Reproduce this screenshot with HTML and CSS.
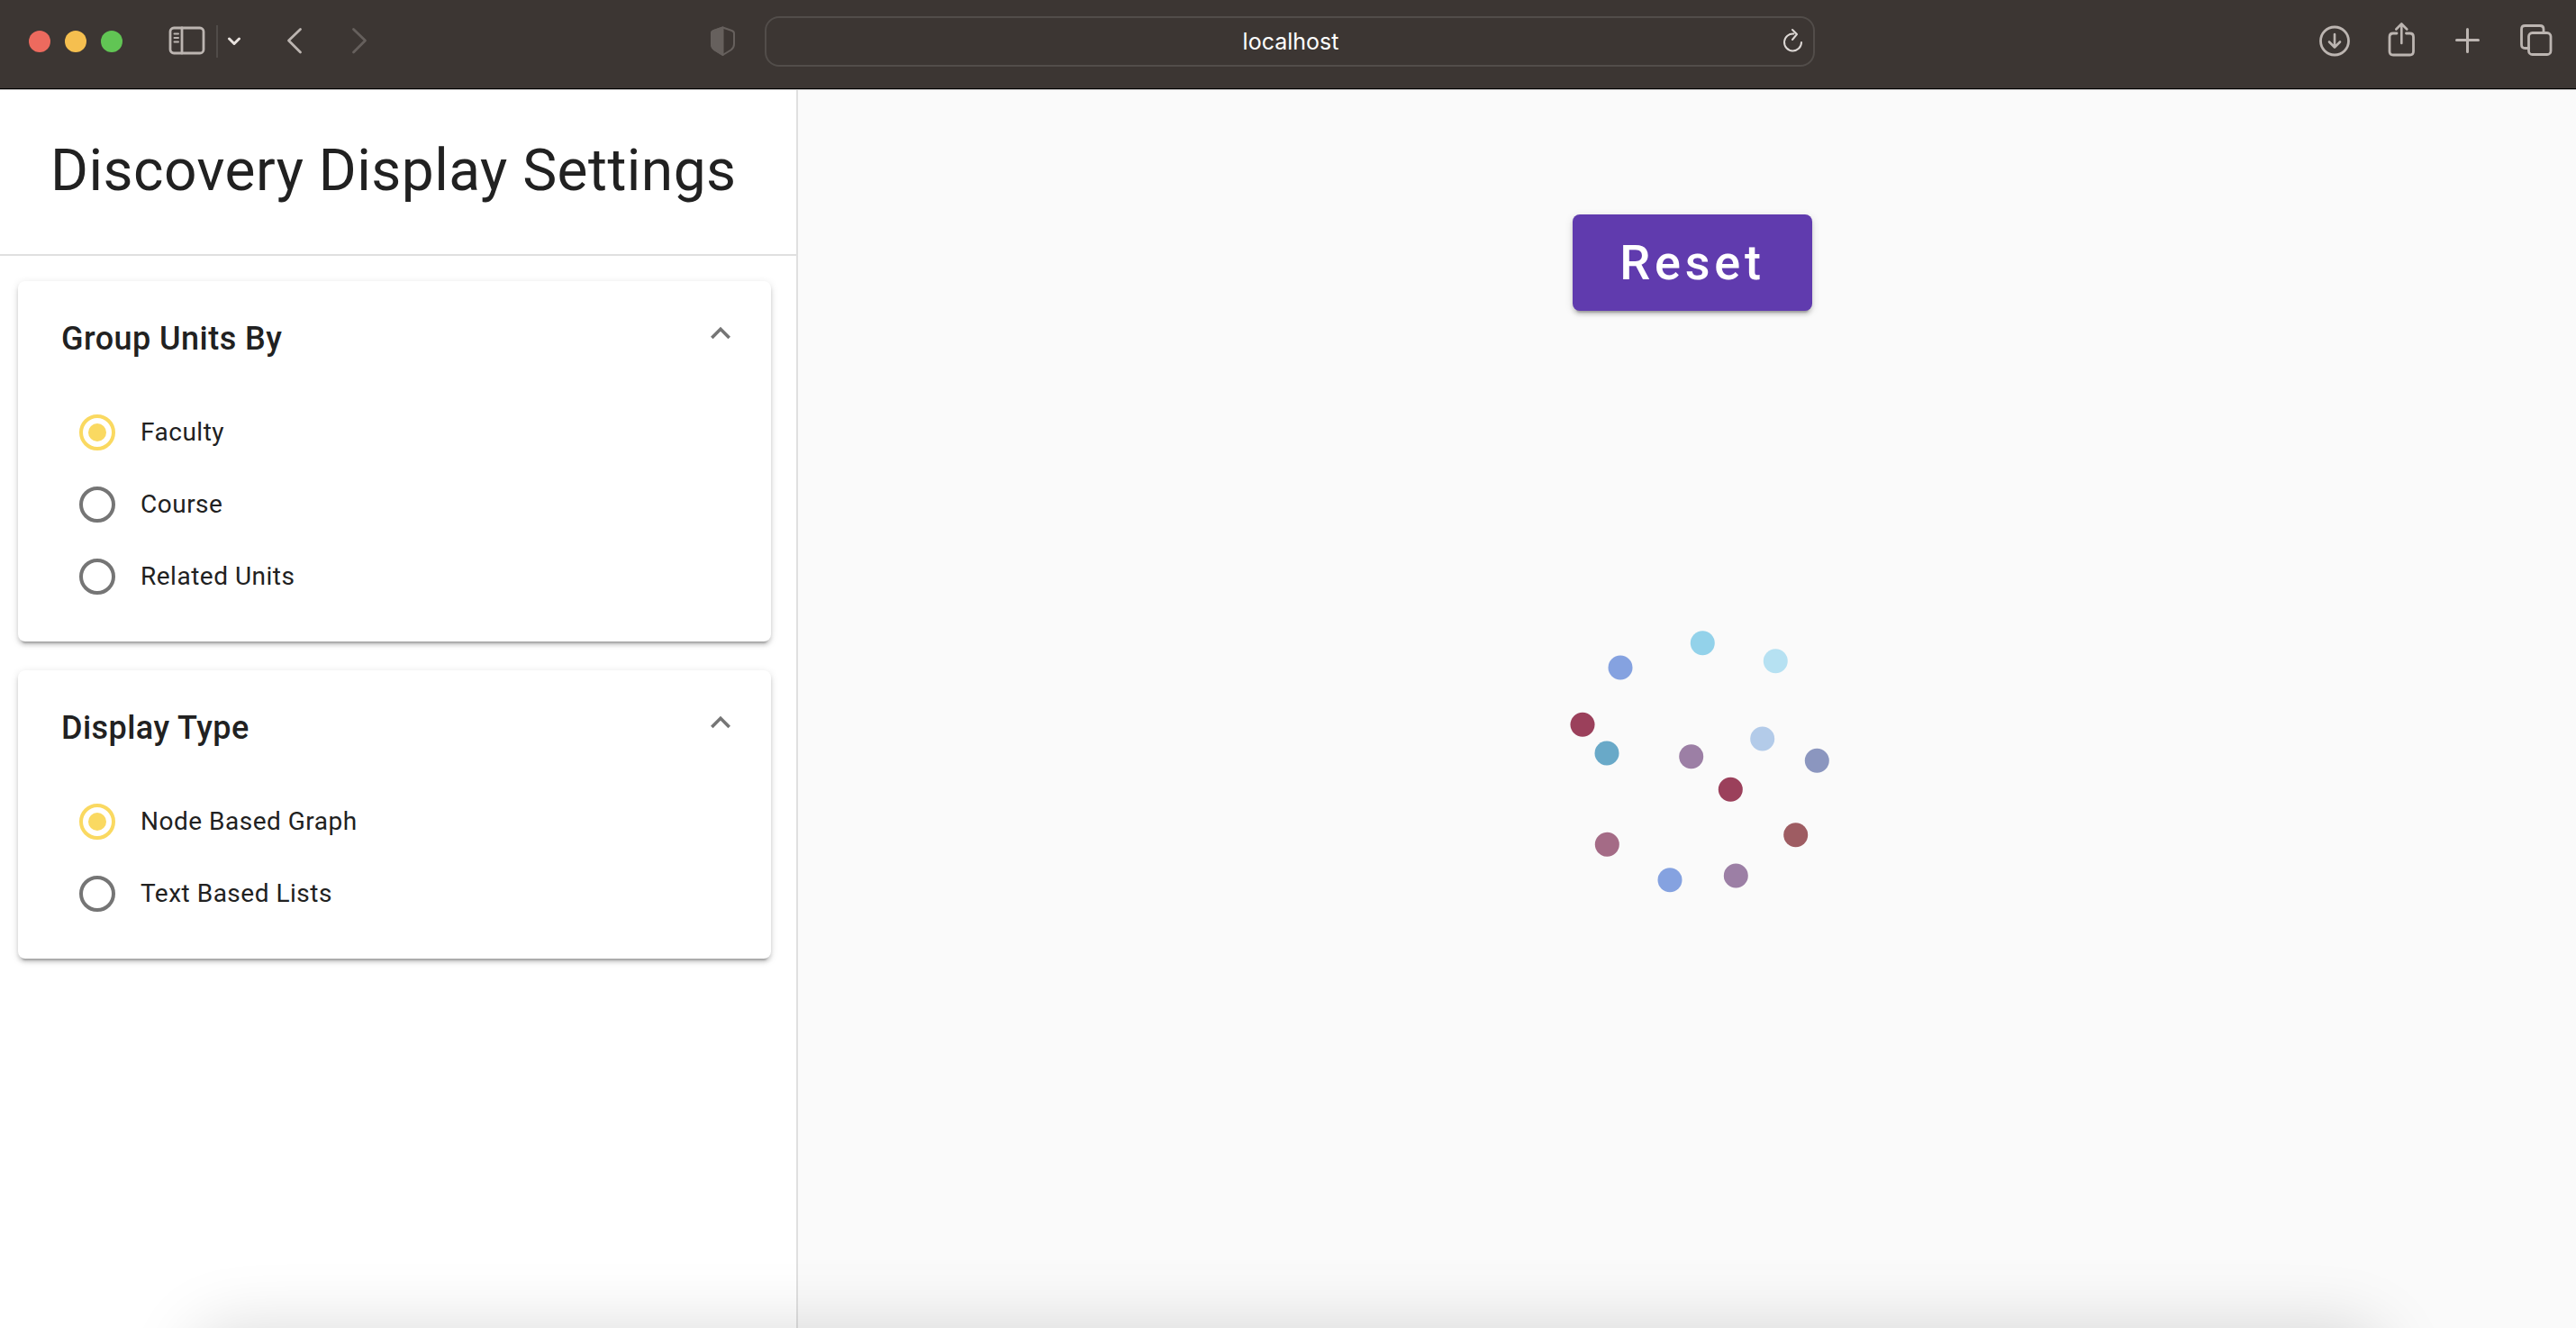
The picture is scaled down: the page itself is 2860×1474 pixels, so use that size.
FILE: index.html
```html
<!DOCTYPE html>
<html lang="en">
<head>
<meta charset="utf-8">
<meta name="viewport" content="width=device-width, initial-scale=1">
<title>Discovery Display Settings</title>
<link rel="stylesheet" href="styles.css">
</head>
<body>
<header class="toolbar">
  <div class="toolbar-left">
    <div class="lights">
      <button class="light light-close" aria-label="Close"></button>
      <button class="light light-min" aria-label="Minimize"></button>
      <button class="light light-max" aria-label="Full screen"></button>
    </div>
    <button class="tool sidebar-toggle" aria-label="Show sidebar">
      <svg width="44" height="44" viewBox="0 0 44 44"><rect x="3" y="7" width="37" height="28" rx="4"/><path d="M16 7v28"/><path class="thin" d="M7.500 13.500h4.500M7.500 18h4.500M7.500 22.500h4.500"/></svg>
    </button>
    <span class="divider"></span>
    <button class="tool tab-menu" aria-label="Tab groups">
      <svg width="18" height="44" viewBox="0 0 18 44"><path d="M3.500 19l5.500 5.500 5.500-5.500"/></svg>
    </button>
    <button class="tool back" aria-label="Back">
      <svg width="44" height="44" viewBox="0 0 44 44"><path d="M28.500 8.500L15.500 21l13 13"/></svg>
    </button>
    <button class="tool forward" aria-label="Forward" disabled>
      <svg width="44" height="44" viewBox="0 0 44 44"><path d="M15.500 8.500L28.500 21l-13 13"/></svg>
    </button>
    <button class="tool shield" aria-label="Privacy report">
      <svg width="44" height="44" viewBox="0 0 44 44"><path d="M22.500 6.500l10 3.500q2.500 1 2.500 3v12q0 4-3.500 6.500l-9 5.500-9-5.500Q10 29 10 25V13q0-2 2.500-3z"/><path class="half" d="M22.500 6.500v30.500l-9-5.500Q10 29 10 25V13q0-2 2.500-3z"/></svg>
    </button>
  </div>
  <div class="address">
    <input class="address-input" type="text" value="localhost" aria-label="Address">
    <button class="tool reload" aria-label="Reload">
      <svg width="32" height="36" viewBox="0 0 32 36"><path d="M16.500 9.500A9.500 9.500 0 1 0 25 19"/><path d="M15 5l5 5-5 6"/></svg>
    </button>
  </div>
  <div class="toolbar-right">
    <button class="tool" aria-label="Downloads">
      <svg width="44" height="44" viewBox="0 0 44 44"><circle cx="20" cy="21.500" r="15.500"/><path class="fine" d="M20 14v14.500M14 22.500l6 6 6-6"/></svg>
    </button>
    <button class="tool" aria-label="Share">
      <svg width="44" height="44" viewBox="0 0 44 44"><path d="M15 13h-4q-4 0-4 4v16q0 4 4 4h18.500q4 0 4-4V17q0-4-4-4h-4"/><path class="fine" d="M20.300 24V3M14.300 8.500l6-6 6 6"/></svg>
    </button>
    <button class="tool" aria-label="New tab">
      <svg width="44" height="44" viewBox="0 0 44 44"><path class="thick" d="M19.500 8.500v25M7.500 20.500h24"/></svg>
    </button>
    <button class="tool" aria-label="Tab overview">
      <svg width="44" height="44" viewBox="0 0 44 44"><rect x="13.500" y="12.500" width="24.500" height="24" rx="4"/><path d="M13.500 29.500H9.500q-4 0-4-4V8.500q0-4 4-4H26q4 0 4 4v4"/></svg>
    </button>
  </div>
</header>

<div class="app">
  <aside class="settings">
    <div class="settings-header"><h1 class="settings-title">Discovery Display Settings</h1></div>
    <div class="cards">
      <section class="card">
        <div class="card-header">
          <h2 class="card-title" id="group-title">Group Units By</h2>
          <button class="collapse" aria-label="Collapse Group Units By"><svg width="44" height="44" viewBox="0 0 24 24"><path d="M7.410 15.410L12 10.830l4.590 4.580L18 14l-6-6-6 6z"/></svg></button>
        </div>
        <div class="options" role="radiogroup" aria-labelledby="group-title">
          <label class="option"><input class="radio" type="radio" name="group" checked><span>Faculty</span></label>
          <label class="option"><input class="radio" type="radio" name="group"><span>Course</span></label>
          <label class="option"><input class="radio" type="radio" name="group"><span>Related Units</span></label>
        </div>
      </section>
      <section class="card">
        <div class="card-header">
          <h2 class="card-title" id="display-title">Display Type</h2>
          <button class="collapse" aria-label="Collapse Display Type"><svg width="44" height="44" viewBox="0 0 24 24"><path d="M7.410 15.410L12 10.830l4.590 4.580L18 14l-6-6-6 6z"/></svg></button>
        </div>
        <div class="options" role="radiogroup" aria-labelledby="display-title">
          <label class="option"><input class="radio" type="radio" name="display" checked><span>Node Based Graph</span></label>
          <label class="option"><input class="radio" type="radio" name="display"><span>Text Based Lists</span></label>
        </div>
      </section>
    </div>
  </aside>
  <main class="stage">
    <button class="reset">Reset</button>
    <svg class="graph" width="320" height="320" viewBox="-10 0 320 320" role="img" aria-label="Unit graph">
      <circle cx="161.300" cy="23.700" r="13.500" fill="#93d2ea"/>
      <circle cx="70" cy="51" r="13.500" fill="#85a2e0"/>
      <circle cx="242.300" cy="43.700" r="13.500" fill="#b6e1f2"/>
      <circle cx="28" cy="114.300" r="13.500" fill="#9b405b"/>
      <circle cx="55" cy="146" r="13.500" fill="#69a9c8"/>
      <circle cx="148.700" cy="149.700" r="13.500" fill="#9c7fa5"/>
      <circle cx="227.700" cy="130" r="13.500" fill="#b3cbe9"/>
      <circle cx="288.300" cy="154.300" r="13.500" fill="#8b96bf"/>
      <circle cx="192.300" cy="186.300" r="13.500" fill="#9b405b"/>
      <circle cx="264.700" cy="236.700" r="13.500" fill="#9e5c62"/>
      <circle cx="55.300" cy="247.300" r="13.500" fill="#a46b86"/>
      <circle cx="125" cy="286.700" r="13.500" fill="#85a2e0"/>
      <circle cx="198.300" cy="282" r="13.500" fill="#9c7fa5"/>
    </svg>
  </main>
</div>
<div class="dock-shadow"></div>
</body>
</html>
```
FILE: styles.css
```css
*, *::before, *::after { box-sizing: border-box; }

body {
  margin: 0;
  min-height: 100vh;
  display: flex;
  flex-direction: column;
  background: #fafafa;
  color: #212121;
  font-family: Roboto, "Liberation Sans", sans-serif;
}

button {
  margin: 0;
  padding: 0;
  border: 0;
  background: none;
  font: inherit;
}

svg { display: block; }

/* Browser toolbar */
.toolbar {
  display: grid;
  grid-template-columns: 1fr minmax(0, 1166px) 1fr;
  align-items: center;
  height: 99px;
  padding: 0 22px 6px 26px;
  background: #3c3633;
  border-bottom: 1px solid #000;
}

.toolbar-left { display: flex; align-items: center; padding-left: 6px; }
.toolbar-right { display: flex; align-items: center; justify-content: flex-end; gap: 30px; }

.lights { display: flex; gap: 16px; }
.light { width: 24px; height: 24px; border-radius: 50%; }
.light-close { background: #ed6a5e; }
.light-min { background: #f5bf4f; }
.light-max { background: #61c554; }

.tool svg {
  fill: none;
  stroke: #bcb5b1;
  stroke-width: 2.8;
  stroke-linecap: round;
  stroke-linejoin: round;
}
.tool .thin { stroke-width: 2; }
.tool .fine { stroke-width: 2.6; }
.tool .thick { stroke-width: 3; }

.sidebar-toggle { margin-left: 50px; }
.divider { width: 2px; height: 36px; margin: 0 9px 0 10px; background: #504b48; }
.tab-menu svg { stroke: #e8e2de; stroke-width: 3; }
.back { margin-left: 36px; }
.forward { margin-left: 28px; }
.forward svg { stroke: #66605d; }
.shield { margin-left: auto; margin-right: 25px; }
.shield svg { stroke: #66605d; stroke-width: 2; }
.shield .half { fill: #66605d; }

.address {
  display: flex;
  align-items: center;
  height: 56px;
  border: 2px solid #524d4a;
  border-radius: 16px;
  padding: 0 6px 0 40px;
}
.address-input {
  flex: 1;
  min-width: 0;
  padding: 0;
  border: 0;
  outline: 0;
  background: none;
  color: #fff;
  font-family: Inter, "Liberation Sans", sans-serif;
  font-size: 25px;
  line-height: 36px;
  text-align: center;
}
.reload svg { stroke: #ddd8d5; stroke-width: 2; }

/* Page */
.app { display: flex; flex: 1; border-top: 1px solid #c4c3c2; }

.settings {
  flex: 0 0 886px;
  background: #fff;
  border-right: 2px solid #e0e0e0;
}
.settings-header {
  padding: 50px 56px 52px;
  border-bottom: 2px solid #e0e0e0;
}
.settings-title {
  margin: 0;
  font-size: 64px;
  font-weight: 400;
  line-height: 80px;
  letter-spacing: 0.0073529em;
  white-space: nowrap;
}

.cards {
  display: flex;
  flex-direction: column;
  gap: 32px;
  padding: 28px 28px 28px 20px;
}
.card {
  padding: 36px 34px 32px 48px;
  background: #fff;
  border-radius: 8px;
  box-shadow:
    0 6px 2px -4px rgba(0, 0, 0, 0.2),
    0 4px 4px 0 rgba(0, 0, 0, 0.14),
    0 2px 10px 0 rgba(0, 0, 0, 0.12);
}
.card-header {
  display: flex;
  align-items: flex-start;
  justify-content: space-between;
  margin-bottom: 36px;
}
.card-title {
  margin: 0;
  font-size: 36px;
  font-weight: 500;
  line-height: 56px;
  letter-spacing: 0.0125em;
}
.collapse svg { fill: #757575; }

.options { padding-left: 20px; }
.option {
  display: flex;
  align-items: center;
  gap: 28px;
  height: 80px;
  font-size: 28px;
  line-height: 40px;
  letter-spacing: 0.0178571em;
}
.radio {
  appearance: none;
  width: 40px;
  height: 40px;
  margin: 0;
  border: 4px solid #757575;
  border-radius: 50%;
}
.radio:checked {
  border-color: #fad961;
  background: #fad961;
  background-clip: content-box;
  padding: 6px;
}

.stage {
  flex: 1;
  display: flex;
  flex-direction: column;
  align-items: center;
  padding: 138px 0 0 12px;
}
.reset {
  padding: 0 52px;
  border-radius: 8px;
  background: #603bae;
  color: #fff;
  font-size: 54px;
  font-weight: 500;
  line-height: 107px;
  letter-spacing: 0.0892857em;
  box-shadow:
    0 6px 2px -4px rgba(0, 0, 0, 0.2),
    0 4px 4px 0 rgba(0, 0, 0, 0.14),
    0 2px 10px 0 rgba(0, 0, 0, 0.12);
}
.graph { margin-top: 345px; }

/* Soft shadow cast by the dock along the bottom edge */
.dock-shadow {
  position: fixed;
  left: 7.5%;
  right: 7.5%;
  bottom: -160px;
  height: 160px;
  border-radius: 40px;
  box-shadow: 0 0 76px rgba(0, 0, 0, 0.15);
  pointer-events: none;
}
```
